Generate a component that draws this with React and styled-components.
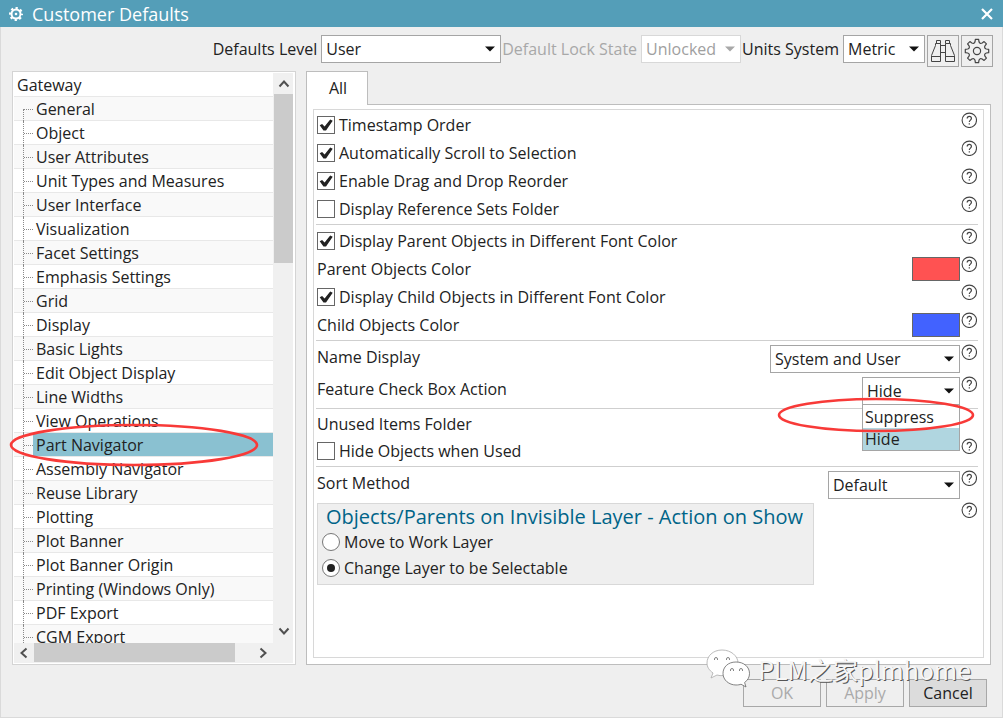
import { useState } from 'react';
import styled, { createGlobalStyle, css } from 'styled-components';

const GlobalStyle = createGlobalStyle`
  * {
    box-sizing: border-box;
  }

  body {
    margin: 0;
  }

  body, button, select, input {
    font-family: 'Open Sans', 'Noto Sans CJK SC', sans-serif;
    font-size: 16px;
    color: #222;
  }
`;

const Window = styled.div`
  position: relative;
  display: flex;
  flex-direction: column;
  height: 100vh;
  background: #efefef;
`;

const TitleBar = styled.header`
  display: flex;
  flex: none;
  align-items: center;
  height: 27px;
  padding: 0 10px 0 9px;
  background: #549eb8;
  color: #fff;
`;

const Title = styled.h1`
  flex: 1;
  margin: 0 0 0 9px;
  font-size: 18px;
  font-weight: 400;
  line-height: 26px;
`;

const CloseButton = styled.button`
  display: flex;
  padding: 0;
  border: none;
  background: none;
`;

const Body = styled.div`
  display: flex;
  flex: 1;
  flex-direction: column;
  min-height: 0;
  padding: 8px 9px 10px 11px;
  border: 1px solid #dadada;
  border-top: none;
`;

const Toolbar = styled.div`
  display: flex;
  flex: none;
  justify-content: flex-end;
  align-items: flex-start;
  margin-bottom: 4px;
`;

const ToolLabel = styled.label`
  margin: 0 4px 0 1px;
  line-height: 28px;
  color: ${({ $muted }) => ($muted ? '#a8a8a8' : '#222')};
`;

const IconButton = styled.button`
  display: flex;
  align-items: center;
  justify-content: center;
  width: 32px;
  height: 32px;
  margin-left: 2px;
  padding: 0;
  border: 1px solid #a5a5a5;
  background: #efefef;
`;

const SelectWrap = styled.div`
  position: relative;
  width: ${({ $width }) => $width}px;
`;

const SelectBox = styled.select`
  display: block;
  width: 100%;
  height: 28px;
  padding: 0 20px 0 4px;
  border: 1px solid #a5a5a5;
  border-radius: 0;
  background: #fff;
  appearance: none;

  &:disabled {
    border-color: #d8d8d8;
    color: #a0a0a0;
    opacity: 1;
  }
`;

const Arrow = styled.svg`
  position: absolute;
  top: 11px;
  right: 6px;
  pointer-events: none;
`;

const Columns = styled.main`
  display: flex;
  flex: 1;
  gap: 10px;
  min-height: 0;
`;

const TreeFrame = styled.nav`
  position: relative;
  display: grid;
  flex: none;
  grid-template-columns: 1fr 20px;
  grid-template-rows: minmax(0, 1fr) 20px;
  width: 284px;
  padding: 1px 2px 1px 1px;
  border: 1px solid #d4d4d4;
  background: #fff;
`;

const TreeList = styled.ul`
  margin: 0;
  padding: 0;
  overflow: hidden;
  list-style: none;
`;

const TreeRow = styled.li`
  display: flex;
  height: 24px;
  border-bottom: 1px solid #e8e8e8;
  background: #fff;

  &:nth-child(even) {
    background: #f9f9f9;
  }
`;

const Branch = styled.span`
  display: flex;
  flex: none;
  align-self: flex-end;
  width: 10px;
  height: ${({ $first }) => ($first ? '12px' : '24px')};
  margin: 0 0 -1px 9px;
  border-left: 1px dotted #8a8a8a;

  &::before {
    content: '';
    flex: 1;
    height: 1px;
    margin-top: ${({ $first }) => ($first ? '0' : '12px')};
    border-top: 1px dotted #8a8a8a;
  }
`;

const TreeItem = styled.button`
  flex: 1;
  padding: 0 3px;
  border: none;
  background: none;
  line-height: 24px;
  text-align: left;
  white-space: nowrap;

  ${({ $selected }) =>
    $selected &&
    css`
      background: #8ac1d1;
    `}
`;

const VerticalBar = styled.div`
  display: flex;
  flex-direction: column;
  grid-row: 1 / 3;
  grid-column: 2;
  padding: 1px 0 22px 1px;
  background: #f0f0f0;
`;

const HorizontalBar = styled.div`
  display: flex;
  grid-row: 2;
  grid-column: 1;
  padding-bottom: 1px;
  background: #f0f0f0;
`;

const ScrollButton = styled.button`
  display: flex;
  flex: 0 0 20px;
  align-items: center;
  justify-content: center;
  padding: 0;
  border: none;
  background: none;
`;

const Track = styled.div`
  display: flex;
  flex: 1;
  flex-direction: ${({ $horizontal }) => ($horizontal ? 'row' : 'column')};
`;

const Thumb = styled.div`
  flex: 0 0 ${({ $size }) => $size};
  background: #cbcbcb;
`;

const Content = styled.section`
  display: flex;
  flex: 1;
  flex-direction: column;
  min-width: 0;
  margin-right: 2px;
`;

const Tab = styled.button`
  z-index: 1;
  flex: none;
  align-self: flex-start;
  width: 62px;
  height: 34px;
  margin-bottom: -1px;
  padding: 0 0 2px 2px;
  border: 1px solid #bdbdbd;
  border-bottom: none;
  background: #fff;
`;

const TabPanel = styled.div`
  display: flex;
  flex: 1;
  padding: 4px 6px 6px;
  border: 1px solid #bdbdbd;
  background: #fff;
`;

const Form = styled.form`
  flex: 1;
  padding: 0 5px 0 2px;
  border: 1px solid #d8d8d8;
`;

const Section = styled.div`
  padding: 2px 1px 1px;
  border-bottom: 1px solid #cfcfcf;

  &:first-child {
    padding-top: 1px;
  }

  &:last-child {
    border-bottom: none;
  }
`;

const Row = styled.div`
  display: flex;
  align-items: flex-start;
  min-height: ${({ $tall }) => ($tall ? 32 : 28)}px;
`;

const RowLabel = styled.label`
  flex: 1;
  line-height: 28px;
`;

const SectionHeading = styled.div`
  line-height: 26px;
`;

const CheckLabel = styled.label`
  display: flex;
  flex: 1;
  gap: 4px;
  align-items: center;
  line-height: 28px;
`;

const CheckInput = styled.input`
  flex: none;
  display: grid;
  place-items: center;
  width: 18px;
  height: 18px;
  margin: 0;
  border: 1px solid #666;
  background: #fff;
  appearance: none;

  &:checked::after {
    content: '';
    width: 14px;
    height: 12px;
    background: #222;
    clip-path: polygon(5% 52%, 22% 42%, 40% 62%, 80% 4%, 98% 14%, 50% 96%, 32% 96%);
  }
`;

const Control = styled.div`
  margin: 2px 1px 0 0;
`;

const Swatch = styled.input`
  display: block;
  width: 48px;
  height: 24px;
  padding: 0;
  border: 1px solid #666;
  background: none;
  appearance: none;

  &::-webkit-color-swatch-wrapper {
    padding: 0;
  }

  &::-webkit-color-swatch {
    border: none;
    border-radius: 0;
  }
`;

const HelpButton = styled.button`
  display: flex;
  flex: none;
  margin-top: 1px;
  padding: 0;
  border: none;
  background: none;
`;

const Menu = styled.ul`
  position: absolute;
  top: 27px;
  left: 0;
  z-index: 2;
  width: 100%;
  margin: 0;
  padding: 1px 0 0;
  border: 1px solid #a5a5a5;
  background: #fff;
  list-style: none;
`;

const MenuItem = styled.li`
  padding: 0 2px;
  background: ${({ $active }) => ($active ? '#b0d6e0' : '#fff')};
  line-height: 22px;
`;

const Marker = styled.svg`
  position: absolute;
  top: ${({ $top }) => $top}px;
  left: ${({ $left }) => $left}px;
  z-index: 3;
  overflow: visible;
  pointer-events: none;
`;

const Group = styled.fieldset`
  margin: 2px 0 0;
  padding: 0 10px 3px 4px;
  border: 1px solid #d8d8d8;
  background: #efefef;
`;

const GroupTitle = styled.div`
  padding-left: 4px;
  color: #006488;
  font-size: 20px;
  line-height: 25px;
`;

const RadioLabel = styled.label`
  display: flex;
  gap: 4px;
  align-items: center;
  line-height: 26px;
`;

const RadioInput = styled.input`
  display: grid;
  place-items: center;
  width: 18px;
  height: 18px;
  margin: 0;
  border: 1px solid #777;
  border-radius: 50%;
  background: #fff;
  appearance: none;

  &:checked::after {
    content: '';
    width: 8px;
    height: 8px;
    border-radius: 50%;
    background: #222;
  }
`;

const Spacer = styled.div`
  flex: 1;
`;

const Footer = styled.footer`
  display: flex;
  flex: none;
  gap: 5px;
  justify-content: flex-end;
  margin: 14px 6px 0 0;
`;

const FooterButton = styled.button`
  width: 78px;
  height: 28px;
  padding: 0;
  border: 1px solid #a8a8a8;
  background: #dcdcdc;

  &:disabled {
    background: #efefef;
    color: #aaa;
  }
`;

const Watermark = styled.div`
  position: absolute;
  right: 32px;
  bottom: 29px;
  z-index: 4;
  display: flex;
  gap: 8px;
  align-items: center;
  color: #f6f6f6;
  font-family: 'Noto Sans CJK SC', sans-serif;
  font-size: 25px;
  line-height: 38px;
  text-shadow: 1px 1px 0 #555;
  pointer-events: none;
`;

const treeItems = [
  'General',
  'Object',
  'User Attributes',
  'Unit Types and Measures',
  'User Interface',
  'Visualization',
  'Facet Settings',
  'Emphasis Settings',
  'Grid',
  'Display',
  'Basic Lights',
  'Edit Object Display',
  'Line Widths',
  'View Operations',
  'Part Navigator',
  'Assembly Navigator',
  'Reuse Library',
  'Plotting',
  'Plot Banner',
  'Plot Banner Origin',
  'Printing (Windows Only)',
  'PDF Export',
  'CGM Export',
];

const polar = (angle, radius) => {
  const rad = (angle * Math.PI) / 180;
  return `${(13 + radius * Math.sin(rad)).toFixed(2)} ${(13 - radius * Math.cos(rad)).toFixed(2)}`;
};

// eight teeth with a rounded valley after each one
const gearPath = [0, 45, 90, 135, 180, 225, 270, 315]
  .map(
    (a, i) =>
      `${i === 0 ? 'M' : 'L'}${polar(a - 8, 11.8)}L${polar(a + 8, 11.8)}L${polar(a + 12, 9.5)}Q${polar(a + 22.5, 7.4)} ${polar(a + 33, 9.5)}`
  )
  .join('') + 'Z';

const TitleGear = () => (
  <svg width="14" height="14" viewBox="0 0 14 14" fill="none" stroke="#fff">
    <circle cx="7" cy="7" r="4.5" strokeWidth="2" />
    <circle cx="7" cy="7" r="6" strokeWidth="2" strokeDasharray="2.3 2.41" strokeDashoffset="1.15" />
    <circle cx="7" cy="7" r="1.3" fill="#fff" stroke="none" />
  </svg>
);

const Gear = () => (
  <svg width="26" height="26" viewBox="0 0 26 26" fill="none" stroke="#444" strokeWidth="1.2" strokeLinejoin="round">
    <path d={gearPath} />
    <circle cx="13" cy="13" r="3.6" />
  </svg>
);

const Binoculars = () => (
  <svg width="26" height="26" viewBox="0 0 26 26" fill="none" stroke="#444">
    <path d="M6.5 5.5v-3h4v3M5.5 5.5h5v18h-9v-6l4-10zM1.5 18.5h9" />
    <path d="M19.5 5.5v-3h-4v3M20.5 5.5h-5v18h9v-6l-4-10zM24.5 18.5h-9" />
    <path d="M10.5 7.5h5M10.5 14.5h5" />
  </svg>
);

const Chevron = ({ rotate = 0 }) => (
  <svg width="12" height="12" viewBox="0 0 12 12" fill="none" stroke="#505050" strokeWidth="2">
    <path d="M1.5 8.5l4.5-5 4.5 5" transform={`rotate(${rotate} 6 6)`} />
  </svg>
);

const Help = () => (
  <HelpButton type="button" aria-label="Help">
    <svg width="16" height="16" viewBox="0 0 16 16" fill="none" stroke="#444" strokeWidth="1.1">
      <circle cx="8.3" cy="8.3" r="7.2" />
      <path d="M6.2 6.6c0-1.5.9-2.2 2.1-2.2s2.1.8 2.1 2c0 1.5-2.1 1.9-2.1 3.7M8.3 11.2v1.3" strokeWidth="1.2" />
    </svg>
  </HelpButton>
);

const Select = ({ id, width, options, disabled, children }) => (
  <SelectWrap $width={width}>
    <SelectBox id={id} disabled={disabled}>
      {options.map((option) => (
        <option key={option}>{option}</option>
      ))}
    </SelectBox>
    <Arrow width="10" height="6" viewBox="0 0 10 6">
      <path d="M0 0.5h10L5 5.5z" fill={disabled ? '#a8a8a8' : '#111'} />
    </Arrow>
    {children}
  </SelectWrap>
);

const CheckRow = ({ label, checked = false }) => {
  const [value, setValue] = useState(checked);

  return (
    <Row>
      <CheckLabel>
        <CheckInput type="checkbox" checked={value} onChange={(e) => setValue(e.target.checked)} />
        {label}
      </CheckLabel>
      <Help />
    </Row>
  );
};

const ColorRow = ({ id, label, color }) => (
  <Row>
    <RowLabel htmlFor={id}>{label}</RowLabel>
    <Control>
      <Swatch id={id} type="color" defaultValue={color} />
    </Control>
    <Help />
  </Row>
);

const SelectRow = ({ id, label, children, ...rest }) => (
  <Row $tall>
    <RowLabel htmlFor={id}>{label}</RowLabel>
    <Control>
      <Select id={id} {...rest}>
        {children}
      </Select>
    </Control>
    <Help />
  </Row>
);

const Tree = () => {
  const [selected, setSelected] = useState('Part Navigator');

  return (
    <TreeFrame>
      <TreeList>
        <TreeRow>
          <TreeItem>Gateway</TreeItem>
        </TreeRow>
        {treeItems.map((item, index) => (
          <TreeRow key={item}>
            <Branch $first={index === 0} />
            <TreeItem $selected={item === selected} onClick={() => setSelected(item)}>
              {item}
            </TreeItem>
          </TreeRow>
        ))}
      </TreeList>
      <VerticalBar>
        <ScrollButton aria-label="Scroll up"><Chevron /></ScrollButton>
        <Track>
          <Thumb $size="32%" />
        </Track>
        <ScrollButton aria-label="Scroll down"><Chevron rotate={180} /></ScrollButton>
      </VerticalBar>
      <HorizontalBar>
        <ScrollButton aria-label="Scroll left"><Chevron rotate={-90} /></ScrollButton>
        <Track $horizontal>
          <Thumb $size="92%" />
        </Track>
        <ScrollButton aria-label="Scroll right"><Chevron rotate={90} /></ScrollButton>
      </HorizontalBar>
      <Marker $top={351} $left={-4} width="250" height="44">
        <ellipse cx="125" cy="22" rx="123" ry="20" fill="none" stroke="#f83a38" strokeWidth="2.6" />
      </Marker>
    </TreeFrame>
  );
};

const App = () => {
  const [layerAction, setLayerAction] = useState('selectable');

  return (
    <Window>
      <GlobalStyle />
      <TitleBar>
        <TitleGear />
        <Title>Customer Defaults</Title>
        <CloseButton aria-label="Close">
          <svg width="12" height="12" viewBox="0 0 12 12" stroke="#fff" strokeWidth="2.2">
            <path d="M1 1l10 10M11 1L1 11" />
          </svg>
        </CloseButton>
      </TitleBar>

      <Body>
        <Toolbar>
          <ToolLabel htmlFor="level">Defaults Level</ToolLabel>
          <Select id="level" width={180} options={['User']} />
          <ToolLabel htmlFor="lock" $muted>Default Lock State</ToolLabel>
          <Select id="lock" width={100} options={['Unlocked']} disabled />
          <ToolLabel htmlFor="units">Units System</ToolLabel>
          <Select id="units" width={82} options={['Metric']} />
          <IconButton aria-label="Find"><Binoculars /></IconButton>
          <IconButton aria-label="Settings"><Gear /></IconButton>
        </Toolbar>

        <Columns>
          <Tree />

          <Content>
            <Tab>All</Tab>
            <TabPanel>
              <Form>
                <Section>
                  <CheckRow label="Timestamp Order" checked />
                  <CheckRow label="Automatically Scroll to Selection" checked />
                  <CheckRow label="Enable Drag and Drop Reorder" checked />
                  <CheckRow label="Display Reference Sets Folder" />
                </Section>
                <Section>
                  <CheckRow label="Display Parent Objects in Different Font Color" checked />
                  <ColorRow id="parent-color" label="Parent Objects Color" color="#ff5252" />
                  <CheckRow label="Display Child Objects in Different Font Color" checked />
                  <ColorRow id="child-color" label="Child Objects Color" color="#4262ff" />
                </Section>
                <Section>
                  <SelectRow id="name-display" label="Name Display" width={190} options={['System and User']} />
                  <SelectRow id="feature-action" label="Feature Check Box Action" width={98} options={['Hide']}>
                    <Menu>
                      <MenuItem>Suppress</MenuItem>
                      <MenuItem $active>Hide</MenuItem>
                    </Menu>
                    <Marker $top={20} $left={-84} width="198" height="36">
                      <ellipse cx="98" cy="18" rx="97" ry="16" fill="none" stroke="#f83a38" strokeWidth="2.6" />
                    </Marker>
                  </SelectRow>
                </Section>
                <Section>
                  <SectionHeading>Unused Items Folder</SectionHeading>
                  <CheckRow label="Hide Objects when Used" />
                </Section>
                <Section>
                  <SelectRow id="sort-method" label="Sort Method" width={132} options={['Default']} />
                  <Row>
                    <Group aria-labelledby="layer-title">
                      <GroupTitle id="layer-title">Objects/Parents on Invisible Layer - Action on Show</GroupTitle>
                      <RadioLabel>
                        <RadioInput
                          type="radio"
                          name="layer"
                          checked={layerAction === 'work'}
                          onChange={() => setLayerAction('work')}
                        />
                        Move to Work Layer
                      </RadioLabel>
                      <RadioLabel>
                        <RadioInput
                          type="radio"
                          name="layer"
                          checked={layerAction === 'selectable'}
                          onChange={() => setLayerAction('selectable')}
                        />
                        Change Layer to be Selectable
                      </RadioLabel>
                    </Group>
                    <Spacer />
                    <Help />
                  </Row>
                </Section>
              </Form>
            </TabPanel>
          </Content>
        </Columns>

        <Footer>
          <FooterButton disabled>OK</FooterButton>
          <FooterButton disabled>Apply</FooterButton>
          <FooterButton>Cancel</FooterButton>
        </Footer>
      </Body>

      <Watermark>
        <svg width="44" height="40" viewBox="0 0 44 40" stroke="#666" strokeWidth="0.8">
          <path d="M16 1C7 1 1 7 1 14c0 4 2 7 6 10l-2 5 6-3c2 .6 4 .8 6 .6C27 26 32 21 32 14S25 1 16 1z" fill="#fff" stroke="#aaa" />
          <path d="M30 13c-8 0-13 5-13 11.5S23 36 30 36c2 0 4-.3 5-.8l5 2.8-1.4-4.5C42 31 43.5 28 43.5 24.5 43.5 18 38 13 30 13z" fill="#fff" />
          <g fill="none">
            <path d="M8.5 11v-1a1.5 1.5 0 0 1 3 0v1M20.5 11v-1a1.5 1.5 0 0 1 3 0v1" />
            <path d="M24.5 22v-1a1.5 1.5 0 0 1 3 0v1M33.5 22v-1a1.5 1.5 0 0 1 3 0v1" />
          </g>
        </svg>
        PLM之家plmhome
      </Watermark>
    </Window>
  );
};

export default App;
